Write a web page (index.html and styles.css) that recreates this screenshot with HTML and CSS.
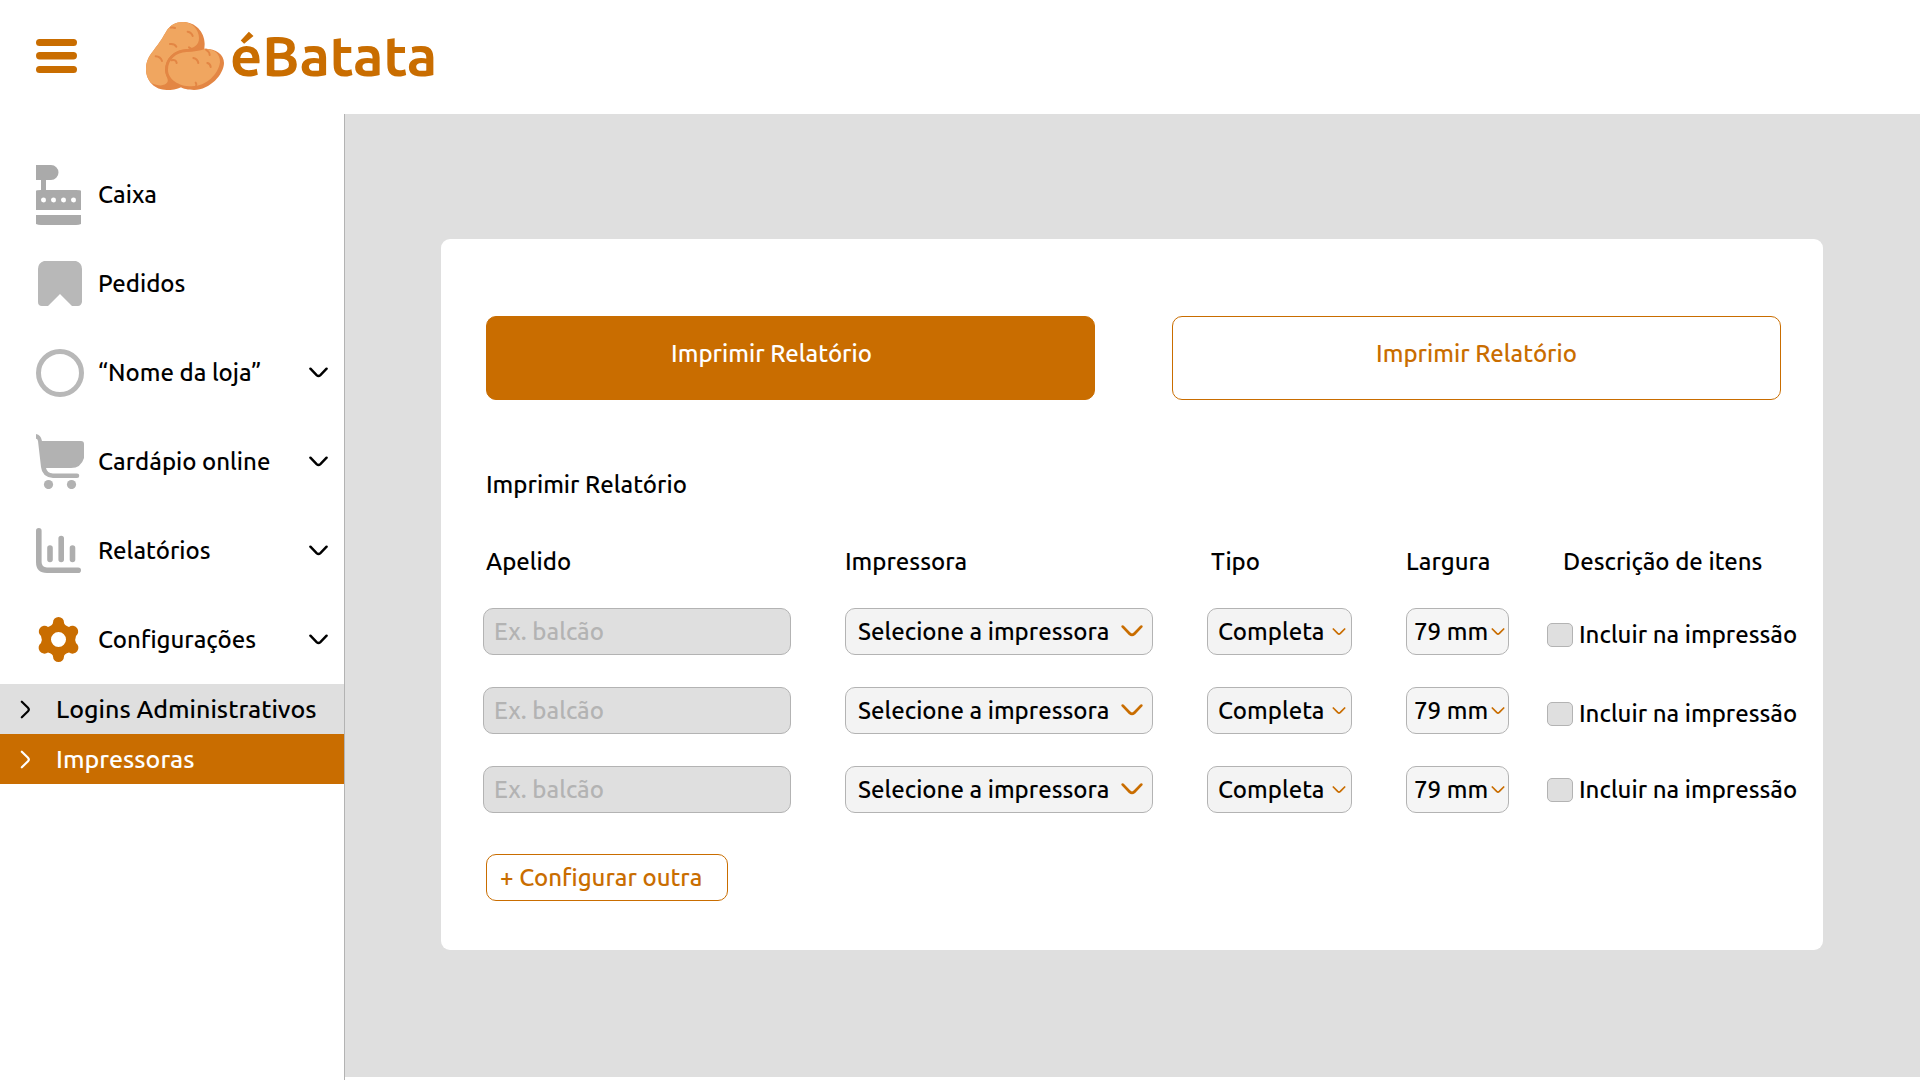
FILE: index.html
```html
<!DOCTYPE html>
<html lang="pt-BR">
<head>
  <meta charset="utf-8">
  <meta name="viewport" content="width=device-width, initial-scale=1">
  <title>éBatata – Impressoras</title>
  <link rel="stylesheet" href="styles.css">
</head>
<body>
  <svg class="sprite" aria-hidden="true">
    <symbol id="chevron" viewBox="0 0 20 12"><path d="M1.5 1.5 L8 8.2 Q10 10 12 8.2 L18.500 1.500" fill="none" stroke="currentColor" stroke-width="2.600" stroke-linecap="round"/></symbol>
    <symbol id="chevron-right" viewBox="0 0 12 20"><path d="M2 1.500 L8.700 8 Q10.500 10 8.700 12 L2 18.500" fill="none" stroke="currentColor" stroke-width="2.400" stroke-linecap="round"/></symbol>
  </svg>

  <header class="topbar">
    <button class="menu-button" type="button" aria-label="Menu">
      <svg width="41" height="34" viewBox="0 0 41 34"><g fill="currentColor"><rect width="41" height="7" rx="3.500"/><rect y="13" width="41" height="7.500" rx="3.700"/><rect y="27" width="41" height="7" rx="3.500"/></g></svg>
    </button>
    <a class="brand" href="#">
      <svg width="78" height="68" viewBox="438 69 234 204" aria-hidden="true">
        <path fill="#e38644" d="M549 69C585 69 614 98 614 135L612 165 545 264C530 272 515 273 500 273C465 273 438 247 438 211C438 185 447 172 460 155C482 128 490 112 499 97C510 78 528 69 549 69Z"/>
        <path fill="#f0a660" d="M549 69C576 69 597 92 597 117C597 138 582 149 555 151C520 155 496 180 495 212C495 230 508 240 502 250C495 262 474 262 453 251C443 240 438 228 438 211C438 185 447 172 460 155C482 128 490 112 499 97C510 78 528 69 549 69Z"/>
        <path fill="#e38644" d="M496 214C496 175 525 152 560 151C578 151 592 149 612 149C647 148 672 165 672 192C672 225 630 273 582 273C565 273 548 269 543 265C515 252 496 240 496 214Z"/>
        <path fill="#f0a660" d="M504 212C504 182 528 160 560 159C582 159 598 155 615 150C642 149 661 164 660 190C655 225 620 262 575 262C535 262 504 240 504 212Z"/>
        <g fill="none" stroke="#e38644" stroke-width="6" stroke-linecap="round"><path d="M513 86Q519 84 525 87M563 98Q575 100 578 111M510 135Q523 133 529 143M467 172Q482 173 486 186M567 145L575 150M514 184Q528 180 530 192M580 177Q593 180 595 192M622 192Q631 194 632 204M618 152Q628 158 629 168M587 251Q591 256 588 262"/></g>
      </svg>
      <span class="brand-name">éBatata</span>
    </a>
  </header>

  <div class="layout">
    <nav class="sidebar" aria-label="Principal">
      <a class="nav-item" href="#">
        <svg class="nav-icon register" width="45" height="60" viewBox="0 0 45 60"><path fill="currentColor" fill-rule="evenodd" d="M0 0H15A7.500 7.500 0 0 1 15 15H10V25H40Q45 25 45 26V45H0V26Q0 25 5 25V15H0ZM7.500 32.500a2.500 2.500 0 1 0 .01 5a2.500 2.500 0 1 0-.01-5M17.500 32.500a2.500 2.500 0 1 0 .01 5a2.500 2.500 0 1 0-.01-5M27.500 32.500a2.500 2.500 0 1 0 .01 5a2.500 2.500 0 1 0-.01-5M37.500 32.500a2.500 2.500 0 1 0 .01 5a2.500 2.500 0 1 0-.01-5M0 50H45V59Q43 60 40 60H5Q2 60 0 59Z"/></svg>
        <span class="nav-label">Caixa</span>
      </a>
      <a class="nav-item" href="#">
        <svg class="nav-icon bookmark" width="48" height="45" viewBox="0 0 48 45"><path fill="currentColor" d="M8 0H40Q46 2 46 8V41Q45 45 42 45H36L24 33 12 45H6Q2 45 2 41V8Q2 2 8 0Z"/></svg>
        <span class="nav-label">Pedidos</span>
      </a>
      <a class="nav-item" href="#">
        <svg class="nav-icon store" width="48" height="48" viewBox="0 0 48 48"><circle cx="24" cy="24" r="21.500" fill="none" stroke="currentColor" stroke-width="5"/></svg>
        <span class="nav-label">“Nome da loja”</span>
        <svg class="nav-chevron" width="19" height="12"><use href="#chevron"/></svg>
      </a>
      <a class="nav-item" href="#">
        <svg class="nav-icon cart" width="48" height="55" viewBox="0 0 48 55"><path fill="currentColor" d="M0 0Q5 1 6 7H45Q48 7 48 10V24Q45 34 35 34H10Q11 39 17 39.500H41A2.200 2.200 0 0 1 41 44H17Q6 43 5 33L2 7Q1 4 0 5Z"/><circle cx="12.500" cy="50.500" r="4.600" fill="currentColor"/><circle cx="35.500" cy="50.500" r="4.600" fill="currentColor"/></svg>
        <span class="nav-label">Cardápio online</span>
        <svg class="nav-chevron" width="19" height="12"><use href="#chevron"/></svg>
      </a>
      <a class="nav-item" href="#">
        <svg class="nav-icon chart" width="45" height="45" viewBox="0 0 45 45"><path fill="none" stroke="currentColor" stroke-width="5.600" stroke-linecap="round" d="M2.800 2.800V34Q2.800 42.200 11 42.200H42.200M14 20V31.500M25.200 10.500V31.500M36.500 20V31.500"/></svg>
        <span class="nav-label">Relatórios</span>
        <svg class="nav-chevron" width="19" height="12"><use href="#chevron"/></svg>
      </a>
      <a class="nav-item" href="#" aria-expanded="true">
        <svg class="nav-icon gear" width="45" height="45" viewBox="-2 0 45 45"><path fill="currentColor" fill-rule="evenodd" d="M15 5.500a5.500 5.500 0 0 1 11 0Q26 8 31 10A5.500 5.500 0 1 1 38 19Q36.500 22.500 38 26A5.500 5.500 0 1 1 31 35.500Q26 37 26 39.500a5.500 5.500 0 0 1-11 0Q15 37 10 35.500A5.500 5.500 0 1 1 3 26Q4.500 22.500 3 19A5.500 5.500 0 1 1 10 10Q15 8 15 5.500ZM20.500 15a7.500 7.500 0 1 0 .01 15a7.500 7.500 0 1 0-.01-15Z"/></svg>
        <span class="nav-label">Configurações</span>
        <svg class="nav-chevron" width="19" height="12"><use href="#chevron"/></svg>
      </a>
      <a class="sub-item" href="#"><svg width="11" height="19"><use href="#chevron-right"/></svg><span>Logins Administrativos</span></a>
      <a class="sub-item active" href="#" aria-current="page"><svg width="11" height="19"><use href="#chevron-right"/></svg><span>Impressoras</span></a>
    </nav>

    <main class="content">
      <section class="card">
        <div class="actions">
          <button class="action primary" type="button">Imprimir Relatório</button>
          <button class="action" type="button">Imprimir Relatório</button>
        </div>
        <h1 class="title">Imprimir Relatório</h1>
        <table class="printers">
          <colgroup><col class="col-wide"><col class="col-wide"><col class="col-type"><col class="col-width"><col></colgroup>
          <thead>
            <tr><th class="head-name">Apelido</th><th>Impressora</th><th class="head-type">Tipo</th><th>Largura</th><th class="head-items">Descrição de itens</th></tr>
          </thead>
          <tbody>
            <tr>
              <td><input class="field name-field" type="text" placeholder="Ex. balcão" aria-label="Apelido 1"></td>
              <td><div class="select printer"><select class="field" aria-label="Impressora 1"><option>Selecione a impressora</option></select><svg width="22" height="13"><use href="#chevron"/></svg></div></td>
              <td><div class="select type"><select class="field" aria-label="Tipo 1"><option>Completa</option></select><svg width="14" height="8"><use href="#chevron"/></svg></div></td>
              <td><div class="select paper"><select class="field" aria-label="Largura 1"><option>79 mm</option></select><svg width="14" height="8"><use href="#chevron"/></svg></div></td>
              <td class="include"><label><input type="checkbox">Incluir na impressão</label></td>
            </tr>
            <tr>
              <td><input class="field name-field" type="text" placeholder="Ex. balcão" aria-label="Apelido 2"></td>
              <td><div class="select printer"><select class="field" aria-label="Impressora 2"><option>Selecione a impressora</option></select><svg width="22" height="13"><use href="#chevron"/></svg></div></td>
              <td><div class="select type"><select class="field" aria-label="Tipo 2"><option>Completa</option></select><svg width="14" height="8"><use href="#chevron"/></svg></div></td>
              <td><div class="select paper"><select class="field" aria-label="Largura 2"><option>79 mm</option></select><svg width="14" height="8"><use href="#chevron"/></svg></div></td>
              <td class="include"><label><input type="checkbox">Incluir na impressão</label></td>
            </tr>
            <tr>
              <td><input class="field name-field" type="text" placeholder="Ex. balcão" aria-label="Apelido 3"></td>
              <td><div class="select printer"><select class="field" aria-label="Impressora 3"><option>Selecione a impressora</option></select><svg width="22" height="13"><use href="#chevron"/></svg></div></td>
              <td><div class="select type"><select class="field" aria-label="Tipo 3"><option>Completa</option></select><svg width="14" height="8"><use href="#chevron"/></svg></div></td>
              <td><div class="select paper"><select class="field" aria-label="Largura 3"><option>79 mm</option></select><svg width="14" height="8"><use href="#chevron"/></svg></div></td>
              <td class="include"><label><input type="checkbox">Incluir na impressão</label></td>
            </tr>
          </tbody>
        </table>
        <button class="add" type="button">+ Configurar outra</button>
      </section>
    </main>
  </div>
</body>
</html>
```
FILE: styles.css
```css
:root {
  --brand: #c96d00;
  --gray: #dfdfdf;
  --line: #b3b3b3;
}

* { box-sizing: border-box; }

body {
  margin: 0;
  min-height: 100vh;
  display: flex;
  flex-direction: column;
  background: #fff;
  color: #000;
  font: 500 24px/30px Ubuntu, "Noto Sans", sans-serif;
}

button, input, select { font: inherit; color: inherit; }
button, select { cursor: pointer; }
a { color: inherit; text-decoration: none; }
svg { display: block; flex: none; }
.sprite { position: absolute; width: 0; height: 0; }

.topbar {
  display: flex;
  align-items: center;
  gap: 69px;
  height: 114px;
  padding: 0 36px 2px;
}

.menu-button {
  padding: 0;
  border: 0;
  background: none;
  color: var(--brand);
}

.brand {
  display: flex;
  align-items: center;
  gap: 6px;
  color: var(--brand);
}

.brand-name { font-size: 56px; font-weight: 700; line-height: 68px; }

.layout { flex: 1; display: flex; }

.sidebar {
  flex: none;
  width: 345px;
  padding-top: 36px;
  border-right: 1px solid var(--line);
}

.nav-item {
  display: grid;
  grid-template-columns: 48px 1fr auto;
  align-items: center;
  column-gap: 14px;
  height: 89px;
  padding: 0 16px 0 36px;
}

.register { color: #aaa; }
.bookmark, .store { color: #b8b8b8; }
.cart { color: #b2b2b2; }
.chart { color: #aeaeae; }
.gear { color: var(--brand); }

.sub-item {
  display: flex;
  align-items: center;
  gap: 25px;
  height: 50px;
  padding-left: 20px;
  background: var(--gray);
  font-size: 25px;
  white-space: nowrap;
}

.sub-item.active { background: var(--brand); color: #fff; }

.content {
  flex: 1;
  margin-bottom: 3px;
  padding: 125px 97px 127px 96px;
  background: var(--gray);
}

.card {
  padding: 77px 23px 49px 42px;
  border-radius: 9px;
  background: #fff;
}

.actions {
  display: grid;
  grid-template-columns: 1fr 1fr;
  gap: 77px;
  margin: 0 19px 0 3px;
}

.action {
  height: 84px;
  padding: 0 0 8px;
  border: 1px solid var(--brand);
  border-radius: 10px;
  background: #fff;
  color: var(--brand);
}

.action.primary { padding-right: 38px; background: var(--brand); color: #fff; }

.title { margin: 70px 3px 47px; font: inherit; }

.printers {
  width: 100%;
  table-layout: fixed;
  border-collapse: collapse;
}

.col-wide { width: 362px; }
.col-type { width: 199px; }
.col-width { width: 141px; }

th { padding: 0 0 31px; font-weight: inherit; text-align: left; white-space: nowrap; }
.head-name { padding-left: 3px; }
.head-type { padding-left: 4px; }
.head-items { padding-left: 16px; }

td { height: 79px; padding: 0; vertical-align: top; }
tbody tr:last-child td { height: 47px; }

.field {
  display: block;
  height: 47px;
  margin: 0;
  border: 1px solid var(--line);
  border-radius: 10px;
}

.name-field { width: 308px; padding: 0 10px; background: var(--gray); }
.name-field::placeholder { color: #b3b3b3; opacity: 1; }

.select { display: grid; align-items: center; }
.select > * { grid-area: 1 / 1; }
.select select { width: 100%; appearance: none; background: #f3f3f3; }
.select svg { justify-self: end; margin-right: 6px; color: var(--brand); pointer-events: none; }

.printer { width: 308px; }
.printer select { padding: 0 12px; }
.printer svg { margin-right: 10px; }
.type { width: 145px; }
.type select { padding: 0 10px; }
.paper { width: 103px; }
.paper select { padding: 0 7px; background: #f5f5f5; }
.paper svg { margin-right: 4px; }

.include label {
  display: flex;
  align-items: center;
  gap: 6px;
  height: 53px;
  white-space: nowrap;
}

.include input {
  appearance: none;
  flex: none;
  width: 26px;
  height: 24px;
  margin: 0;
  border: 1px solid var(--line);
  border-radius: 5px;
  background: var(--gray);
}

.include input:checked { background: var(--brand); }
tbody tr:last-child label { height: 47px; }

.add {
  display: block;
  min-width: 242px;
  height: 47px;
  margin: 41px 3px 0;
  padding: 0 13px;
  border: 1px solid var(--brand);
  border-radius: 10px;
  background: #fff;
  color: var(--brand);
  text-align: left;
}
```
